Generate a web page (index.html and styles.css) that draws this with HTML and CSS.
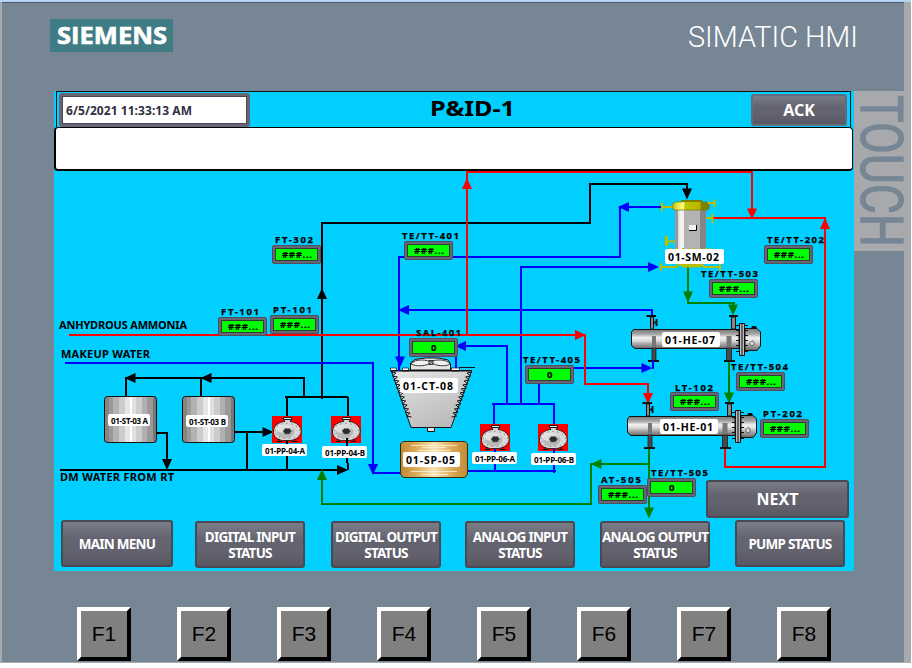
FILE: index.html
```html
<!DOCTYPE html>
<html lang="en">
<head>
<meta charset="utf-8">
<title>P&amp;ID-1</title>
<link rel="stylesheet" href="styles.css">
</head>
<body>
<div class="window">
  <div class="bezel">
    <header class="brand">
      <div class="logo"><svg width="123" height="33"><text x="7" y="25" textLength="110" lengthAdjust="spacingAndGlyphs">SIEMENS</text></svg></div>
      <svg class="product" width="180" height="40"><text x="4" y="27.500" textLength="170" lengthAdjust="spacingAndGlyphs">SIMATIC HMI</text></svg>
    </header>
    <div class="middle">
      <main class="screen">
        <div class="titlebar">
          <div class="clock"><svg width="180" height="26"><text x="2" y="17" textLength="126">6/5/2021 11:33:13 AM</text></svg></div>
          <h1><svg width="90" height="32"><text x="2" y="23" textLength="85" lengthAdjust="spacingAndGlyphs">P&amp;ID-1</text></svg></h1>
          <button class="btn ack">ACK</button>
        </div>
        <div class="alarm"></div>
        <div class="process">
          <svg class="diagram" width="800" height="348" viewBox="54 171 800 348">
            <defs>
              <linearGradient id="steel">
                <stop offset="0" stop-color="#858585"/><stop offset=".08" stop-color="#858585"/><stop offset=".08" stop-color="#999"/><stop offset=".17" stop-color="#999"/><stop offset=".17" stop-color="#b3b3b3"/><stop offset=".28" stop-color="#b3b3b3"/><stop offset=".28" stop-color="#ccc"/><stop offset=".4" stop-color="#ccc"/><stop offset=".4" stop-color="#e6e6e6"/><stop offset=".49" stop-color="#e6e6e6"/><stop offset=".49" stop-color="#fff"/><stop offset=".53" stop-color="#fff"/><stop offset=".53" stop-color="#e0e0e0"/><stop offset=".61" stop-color="#e0e0e0"/><stop offset=".61" stop-color="#ccc"/><stop offset=".72" stop-color="#ccc"/><stop offset=".72" stop-color="#b0b0b0"/><stop offset=".82" stop-color="#b0b0b0"/><stop offset=".82" stop-color="#999"/><stop offset=".93" stop-color="#999"/><stop offset=".93" stop-color="#777"/><stop offset="1" stop-color="#777"/>
              </linearGradient>
              <linearGradient id="pipe" x2="0" y2="1">
                <stop offset="0" stop-color="#777"/><stop offset=".25" stop-color="#a8a8a8"/><stop offset=".42" stop-color="#f0f0f0"/><stop offset=".58" stop-color="#ddd"/><stop offset=".75" stop-color="#aaa"/><stop offset="1" stop-color="#666"/>
              </linearGradient>
              <linearGradient id="gold">
                <stop offset="0" stop-color="#c08a35"/><stop offset=".2" stop-color="#d9a650"/><stop offset=".5" stop-color="#f7e3b8"/><stop offset=".8" stop-color="#d9a650"/><stop offset="1" stop-color="#c08a35"/>
              </linearGradient>
              <linearGradient id="vessel">
                <stop offset="0" stop-color="#999"/><stop offset=".1" stop-color="#999"/><stop offset=".1" stop-color="#d8d8d8"/><stop offset=".18" stop-color="#f2f2f2"/><stop offset=".3" stop-color="#f2f2f2"/><stop offset=".3" stop-color="#b3b3b3"/><stop offset=".8" stop-color="#b3b3b3"/><stop offset=".8" stop-color="#858585"/><stop offset="1" stop-color="#858585"/>
              </linearGradient>
              <linearGradient id="cap">
                <stop offset="0" stop-color="#b5b500"/><stop offset=".15" stop-color="#e6e64d"/><stop offset=".3" stop-color="#ffff80"/><stop offset=".36" stop-color="#c4c400"/><stop offset=".75" stop-color="#b5b500"/><stop offset=".8" stop-color="#808000"/>
              </linearGradient>
              <linearGradient id="hopper" x2=".6" y2="1">
                <stop offset="0" stop-color="#e8e8e8"/><stop offset=".5" stop-color="#d0d0d0"/><stop offset="1" stop-color="#bbb"/>
              </linearGradient>
              <path id="arrow" d="M0 0L-11 -5V5Z"/>
              <g id="tag">
                <rect x=".5" y=".5" width="48" height="18" rx="1.5" fill="#666674" stroke="#4d4f5b"/>
                <rect x="3.5" y="3.5" width="42" height="12" fill="#0f0" stroke="#343b36"/>
              </g>
              <g id="pump">
                <path fill="red" d="M0 0H30V27H0Z"/>
                <path fill="#d8d8d8" stroke="#111" stroke-width=".8" d="M12 2H19V4L18 5.5C24 6 28.5 10 29 14C30 19 25 24 18 24.5H11C5 24 1 20 1.5 15C2 9 7 6 13 5.500L12 4Z"/>
                <ellipse cx="13.500" cy="16" rx="9" ry="6.500" fill="#b8b8b8"/>
                <ellipse cx="12" cy="13" rx="8" ry="4" fill="#f2f2f2" opacity=".65"/>
                <path fill="#eee" stroke="#111" d="M11.500 1.500H19.500V3.500H11.500Z"/>
                <path stroke="#111" d="M5 25.500H10M20 25.500H25M7 23V25M23 23V25"/>
                <path fill="#2b2b2b" stroke="#777" stroke-width=".7" d="M11 15L13 12.500H17.500L19.500 15L17.500 18H13Z"/>
                <path fill="none" stroke="#555" stroke-width=".8" stroke-dasharray="1 4" d="M3 15C4 9 9 7.500 15 7.500S26 10 27.500 15S22 22.500 15 22.500S4 21 3 15"/>
              </g>
              <g id="exchanger">
                <path fill="url(#pipe)" stroke="#111" d="M633.500 329.500H739V348.500H635L631.500 345.500V332Z"/>
                <path fill="#888" stroke="#111" d="M650.500 317H653.500V329H650.500ZM731.500 317H735.500V329H731.500Z"/>
                <path stroke="#111" stroke-width="2" d="M646.500 316H656M729 316H738M656.500 319V326M653 322.500H656"/>
                <path fill="#777" d="M652 336H656V348H652ZM726.500 336H731.500V348H726.500Z"/>
                <path fill="#494949" stroke="#111" stroke-width=".7" d="M652 348H656V361H652ZM726.500 348H731.500V361H726.500Z"/>
                <path stroke="#111" stroke-width="2" d="M648 361H659M724 361H735"/>
                <path fill="url(#pipe)" stroke="#111" d="M745 328.500H757L760.500 332V346L757 350.500H745Z"/>
                <path stroke="#111" d="M736 325.500H748M736 330.500H748M736 335.500H748M736 340.500H748M736 345.500H748M736 351.500H748M752 328V326.500H756V328"/>
                <path fill="#bbb" stroke="#111" d="M739.500 323.500H744.500V355.500H739.500ZM742 323.500V355.500"/>
                <path fill="#ddd" stroke="#666" d="M749.500 343L752 340.500L754 342V345L751 346Z"/>
              </g>
            </defs>

            <g class="line black">
              <path d="M322 399V223H590V184H687V190M304 397V378H128M126 377V397M201 378V397M285 397H348M287 397V418M348 397V418M155 433H167V462M60 470H340M235 432H265M247 432V470"/>
            </g>
            <g class="line blue">
              <path d="M662 207H620V257M621 257H399V360M521 405V267H650M402 310H652V317M574 368H645M652.500 369V360M460 346H507V404M492 404H555M494 404V425M554 404V425M539 383V404M456 356V370M467 471H556M65 363H373V473H400"/>
            </g>
            <g class="line red">
              <path d="M69 335H585V384H648V395M467 335V172H752V210M713 218H825V467H725V448"/>
            </g>
            <g class="line green">
              <path d="M688 265V303H735M733 303V307M729 361V395M649 448V510M648 464H591V504H322V477"/>
            </g>
            <g class="heads black">
              <use href="#arrow" transform="translate(322 288) rotate(-90)"/>
              <use href="#arrow" transform="translate(687 199.500) rotate(90)"/>
              <use href="#arrow" transform="translate(124.500 378) rotate(180)"/>
              <use href="#arrow" transform="translate(200.500 378) rotate(180)"/>
              <use href="#arrow" transform="translate(167 470) rotate(90)"/>
              <use href="#arrow" transform="translate(273.500 432)"/>
              <use href="#arrow" transform="translate(348 470)"/>
            </g>
            <g class="heads blue">
              <use href="#arrow" transform="translate(618 207) rotate(180)"/>
              <use href="#arrow" transform="translate(400 367.500) rotate(90)"/>
              <use href="#arrow" transform="translate(659 267)"/>
              <use href="#arrow" transform="translate(398 310) rotate(180)"/>
              <use href="#arrow" transform="translate(652.500 368)"/>
              <use href="#arrow" transform="translate(455 346) rotate(180)"/>
              <use href="#arrow" transform="translate(373 475) rotate(90)"/>
            </g>
            <g class="heads red">
              <use href="#arrow" transform="translate(467 178) rotate(-90)"/>
              <use href="#arrow" transform="translate(752 219.500) rotate(90)"/>
              <use href="#arrow" transform="translate(825 218) rotate(-90)"/>
              <use href="#arrow" transform="translate(586 335)"/>
              <use href="#arrow" transform="translate(648 404) rotate(90)"/>
            </g>
            <g class="heads green">
              <use href="#arrow" transform="translate(322 469) rotate(-90)"/>
              <use href="#arrow" transform="translate(688 302.500) rotate(90)"/>
              <use href="#arrow" transform="translate(733 315.500) rotate(90)"/>
              <use href="#arrow" transform="translate(729 403.500) rotate(90)"/>
              <use href="#arrow" transform="translate(649 518.500) rotate(90)"/>
              <use href="#arrow" transform="translate(590.500 464) rotate(180)"/>
            </g>

            <!-- storage tanks -->
            <rect x="104.500" y="396.500" width="52" height="46" rx="3" fill="url(#steel)" stroke="#111"/>
            <rect x="182.500" y="396.500" width="52" height="46" rx="3" fill="url(#steel)" stroke="#111"/>

            <!-- pumps -->
            <use href="#pump" x="272" y="416"/>
            <use href="#pump" x="331" y="416"/>
            <use href="#pump" x="480" y="424"/>
            <use href="#pump" x="538" y="424"/>
            <path class="line black" d="M287 441V470M347 438V455L348 470"/>
            <path class="line blue" d="M495 449V471M554 449V473"/>

            <!-- cooling tower -->
            <path fill="url(#hopper)" stroke="#111" d="M391.500 371H471.500L451 427.500H411Z"/>
            <path fill="none" stroke="#111" d="M391 372l5 1l-3.600 3l5 1l-3.600 3l5 1l-3.600 3l5 1l-3.600 3l5 1l-3.600 3l5 1l-3.600 3l5 1l-3.600 3l5 1l-3.600 3l5 1l-3.600 3l5 1l-3.600 3l5 1l-3.600 3l5 1M472 372l-5 1l3.600 3l-5 1l3.600 3l-5 1l3.600 3l-5 1l3.600 3l-5 1l3.600 3l-5 1l3.600 3l-5 1l3.600 3l-5 1l3.600 3l-5 1l3.600 3l-5 1l3.600 3l-5 1l3.600 3l-5 1"/>
            <path fill="#e6e6e6" stroke="#111" d="M410.500 370V363L415 359.500L425 358H438L448 360L450.500 364V370ZM427.500 427.500H434.500V431.500H427.500Z"/>
            <path fill="#f2f2f2" stroke="#111" stroke-width=".8" d="M411 364C415 358 429 360 430 362C435 359 447 359 450 364C446 367 435 366 432 362.500C427 366 416 367 411 364ZM429 360.500H433V364.500H429Z"/>
            <path fill="#fff" stroke="#111" stroke-width=".7" d="M390.500 368H396.500V371H390.500ZM402.500 368H408.500V371H402.500ZM451.500 368H459.500V371H451.500Z"/>
            <path stroke="#111" d="M391 370.500H472M459 367.500H475"/>
            <path class="line blue" d="M399 362V371M456 356V368"/>

            <!-- sump -->
            <path fill="url(#gold)" stroke="#3a2a10" d="M403 441.500H465L467.500 444V474L465 477.500H403L400.500 474V444Z"/>
            <path stroke="#fff3d6" stroke-width="1" opacity=".75" d="M411 445.500H457M418 450.500H450M411 471.500H457M422 447.500H446M421 474.500H448"/>

            <!-- shell vessel -->
            <path fill="url(#vessel)" d="M675 209H706V250H675Z"/>
            <path fill="url(#cap)" stroke="#777700" stroke-width=".7" d="M675 202H682L684 200.500H699L701 202H706L709 204V209L706 210H675L672 208V205Z"/>
            <path fill="none" stroke="#808000" stroke-width="2" d="M681 201H702"/>
            <path fill="none" stroke="#bcbc00" stroke-width="2" d="M708 203H714M662 207H672M662 203V211M714.500 199.500V207M706 218H713M712.500 214V223M667 241.500H675M661 267H676L679 264M661 263V271M720 263V271M721 267H704L701 264M671 248V250M677 248V250M683 248V250M689 248V250M694 248V250M700 248V250M706 248V250M710 248V250"/>
            <path fill="#bcbc00" d="M665 236H668V246H665ZM679 264H703L700 267.500H682Z"/>
            <path fill="#f2f2f2" d="M689 225H696V230H689Z"/>
            <path fill="none" stroke="#000" d="M689 230.500H696.500V225"/>

            <!-- heat exchangers -->
            <use href="#exchanger"/>
            <use href="#exchanger" x="-4" y="87"/>
            <path class="line blue" d="M653 360V369"/>

            <!-- equipment name plates -->
            <g class="plates">
              <rect x="108" y="414" width="42" height="12" rx="2"/><rect x="186" y="415" width="42" height="12" rx="2"/>
              <rect x="262" y="444" width="45" height="12" rx="2"/><rect x="322" y="446" width="45" height="12" rx="2"/>
              <rect x="472" y="452" width="45" height="12" rx="2"/><rect x="531" y="453" width="45" height="12" rx="2"/>
              <rect x="400" y="378" width="58" height="15" rx="2"/><rect x="403" y="452" width="57" height="15" rx="2"/>
              <rect x="665" y="249" width="59" height="15" rx="2"/><rect x="662" y="332" width="58" height="15" rx="2"/>
              <rect x="660" y="419" width="58" height="15" rx="2"/>
            </g>
            <g class="small">
              <text x="111" y="423.500" textLength="37">01-ST-03 A</text><text x="189" y="424.500" textLength="37">01-ST-03 B</text>
              <text x="265" y="453.500" textLength="40">01-PP-04-A</text><text x="325" y="455.500" textLength="40">01-PP-04-B</text>
              <text x="475" y="461.500" textLength="40">01-PP-06-A</text><text x="534" y="462.500" textLength="40">01-PP-06-B</text>
            </g>
            <g class="names">
              <text x="403" y="389.500" textLength="50">01-CT-08</text><text x="406" y="463.500" textLength="49">01-SP-05</text>
              <text x="668" y="260.500" textLength="51">01-SM-02</text><text x="665" y="343.500" textLength="50">01-HE-07</text>
              <text x="663" y="430.500" textLength="50">01-HE-01</text>
            </g>

            <!-- instruments -->
            <use href="#tag" x="272" y="245"/><use href="#tag" x="218" y="317"/><use href="#tag" x="270" y="315"/>
            <use href="#tag" x="404" y="241"/><use href="#tag" x="409" y="338"/><use href="#tag" x="525" y="365"/>
            <use href="#tag" x="764" y="245"/><use href="#tag" x="709" y="279"/><use href="#tag" x="736" y="372"/>
            <use href="#tag" x="670" y="392"/><use href="#tag" x="760" y="419"/><use href="#tag" x="598" y="485"/>
            <use href="#tag" x="647" y="478"/>
            <g class="labels">
              <text x="275" y="243" textLength="38">FT-302</text><text x="221" y="315" textLength="38">FT-101</text>
              <text x="273" y="313" textLength="39">PT-101</text><text x="402" y="239" textLength="57">TE/TT-401</text>
              <text x="416" y="336" textLength="45">SAL-401</text><text x="523" y="363" textLength="57">TE/TT-405</text>
              <text x="767" y="243" textLength="57">TE/TT-202</text><text x="701" y="277" textLength="57">TE/TT-503</text>
              <text x="731" y="370" textLength="57">TE/TT-504</text><text x="675" y="391" textLength="38">LT-102</text>
              <text x="763" y="417" textLength="39">PT-202</text><text x="601" y="483" textLength="40">AT-505</text>
              <text x="651" y="476" textLength="57">TE/TT-505</text>
            </g>
            <g class="values">
              <text x="282" y="258" textLength="30">###...</text><text x="228" y="330" textLength="30">###...</text>
              <text x="280" y="328" textLength="30">###...</text><text x="414" y="254" textLength="30">###...</text>
              <text x="774" y="258" textLength="30">###...</text><text x="719" y="292" textLength="30">###...</text>
              <text x="746" y="385" textLength="30">###...</text><text x="680" y="405" textLength="30">###...</text>
              <text x="770" y="432" textLength="30">###...</text><text x="608" y="498" textLength="30">###...</text>
              <text x="431" y="351">0</text><text x="547" y="378">0</text><text x="669" y="491">0</text>
            </g>
            <g class="feeds">
              <text x="59" y="329" textLength="128">ANHYDROUS AMMONIA</text>
              <text x="61" y="358" textLength="89">MAKEUP WATER</text>
              <text x="60" y="481" textLength="114">DM WATER FROM RT</text>
            </g>
          </svg>
          <button class="btn next">NEXT</button>
        </div>
        <nav class="menu">
          <button class="btn first">MAIN MENU</button>
          <button class="btn low">DIGITAL INPUT<br>STATUS</button>
          <button class="btn low">DIGITAL OUTPUT<br>STATUS</button>
          <button class="btn low">ANALOG INPUT<br>STATUS</button>
          <button class="btn low">ANALOG OUTPUT<br>STATUS</button>
          <button class="btn">PUMP STATUS</button>
        </nav>
      </main>
      <svg class="touch" width="57" height="160"><text transform="translate(7 4) rotate(90)" textLength="152" lengthAdjust="spacingAndGlyphs">TOUCH</text></svg>
    </div>
    <div class="keys">
      <button>F1</button><button>F2</button><button>F3</button><button>F4</button><button>F5</button><button>F6</button><button>F7</button><button>F8</button>
    </div>
  </div>
</div>
</body>
</html>
```
FILE: styles.css
```css
* { box-sizing: border-box; }
body { margin: 0; background: #fff; font-family: "Noto Sans", sans-serif; overflow: hidden; }
svg { display: block; }
button { font: inherit; padding: 0; margin: 0; }

.window {
  width: 911px;
  height: 663px;
  border-top: 2px solid #b4d2f2;
  background: #a7a9ac;
  padding-left: 2px;
}
.bezel {
  width: 902px;
  height: 660px;
  background: #768695;
  border-top: 1px solid #47586c;
}

.brand {
  display: flex;
  justify-content: space-between;
  height: 88px;
  padding: 16px 40px 0 48px;
}
.logo { width: 123px; height: 33px; background: #3f7c83; }
.logo text { font: 700 22.5px "Open Sans", sans-serif; fill: #fff; stroke: #fff; stroke-width: .6px; }
.product text { font: 300 29px Roboto, sans-serif; fill: #fff; }

.middle { display: flex; width: 909px; padding-left: 52px; }
.screen { width: 800px; height: 480px; background: #00cfff; }
.touch { background: #a7a9ac; overflow: visible; }
.touch text { font: 400 60px Roboto, sans-serif; fill: #768695; stroke: #768695; stroke-width: 1.2px; }

.titlebar {
  display: flex;
  justify-content: space-between;
  width: 795px;
  height: 36px;
  margin-left: 2px;
  padding: 1px 3px 0 2px;
  border: 1px solid #111;
  border-bottom: 0;
}
.clock {
  width: 191px;
  height: 34px;
  background: #fff;
  border: 3px solid #666674;
  outline: 1px solid #454854;
  outline-offset: -4px;
  border-radius: 3px;
  padding: 2px 0 0 2px;
}
.clock text { font-weight: 700; font-size: 12px; fill: #30303f; }
h1 { margin: 0 55px 0 0; }
h1 svg { overflow: visible; }
h1 text { font-weight: 700; font-size: 21.5px; fill: #000; }

.alarm {
  width: 799px;
  height: 44px;
  background: #fff;
  border: 1px solid #000;
  border-bottom-width: 2px;
  border-left-width: 2px;
  border-radius: 4px;
}

.btn {
  color: #fff;
  font-weight: 700;
  font-size: 13.5px;
  line-height: 16px;
  letter-spacing: -0.75px;
  border: 2px solid #474a55;
  border-radius: 3px;
  background: linear-gradient(#7b7d86, #646471 38%, #646471 60%, #595761);
  white-space: nowrap;
}
.ack { width: 96px; height: 32px; margin-top: 1px; font-size: 16px; letter-spacing: 0; border-color: #646b7c; }

.process { position: relative; height: 348px; }
.next { position: absolute; right: 5px; bottom: 1px; width: 143px; height: 38px; font-size: 16px; letter-spacing: 0; }

.menu {
  display: grid;
  grid-template-columns: 134px 136px 134px 135px 135px 110px;
  padding: 1px 0 0 7px;
}
.menu .btn { width: 110px; height: 47px; }
.menu .first { width: 112px; }
.menu .low { margin-top: 1px; }

.keys { display: flex; gap: 46px; padding: 36px 0 0 75px; }
.keys button {
  width: 54px;
  height: 54px;
  background: #808080;
  border: 4px solid;
  border-color: #fff #000 #000 #fff;
  font-family: "Liberation Sans", sans-serif;
  font-size: 21px;
  color: #000;
}

.line { fill: none; stroke: currentColor; stroke-width: 2; shape-rendering: crispEdges; }
.heads { fill: currentColor; }
.black { color: #000; }
.blue { color: #00f; }
.red { color: #f00; }
.green { color: #008000; }
.plates { fill: #fff; }
.diagram text { font-weight: 700; fill: #000; }
.small text { font-size: 8px; }
.names text { font-size: 10.5px; }
.labels text { font-size: 9.5px; stroke: #000; stroke-width: .25px; }
.values text { font-size: 9.5px; stroke: #000; stroke-width: .2px; }
.feeds text { font-size: 11px; }
```
